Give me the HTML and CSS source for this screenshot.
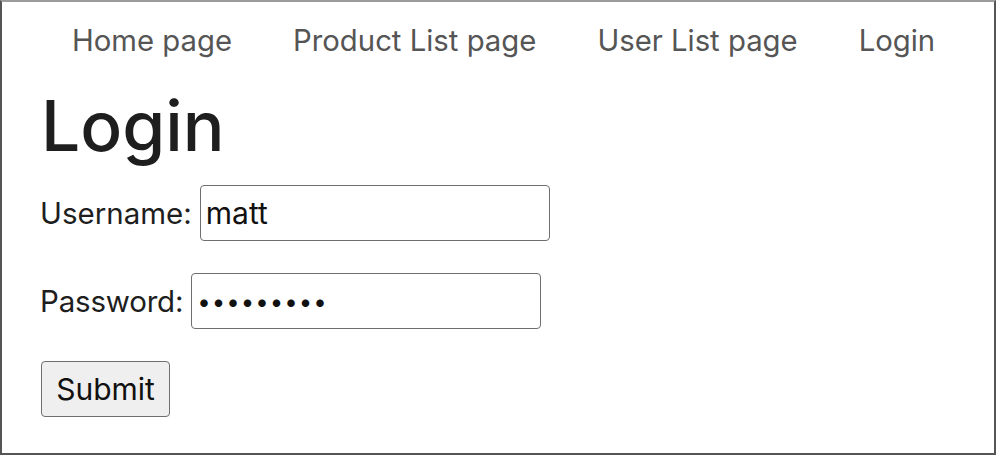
FILE: index.html
```html
<!DOCTYPE html>
<html lang="en">
<head>
<meta charset="utf-8">
<title>Login</title>
<link rel="stylesheet" href="styles.css">
</head>
<body>
<div class="frame">
  <nav class="nav">
    <a class="nav-link" href="#">Home page</a>
    <a class="nav-link" href="#">Product List page</a>
    <a class="nav-link" href="#">User List page</a>
    <a class="nav-link" href="#">Login</a>
  </nav>
  <main class="content">
    <h1 class="title">Login</h1>
    <form class="login-form">
      <div class="row">
        <label class="label" for="username">Username:</label>
        <input class="field" id="username" type="text" value="matt">
      </div>
      <div class="row">
        <label class="label label-tight" for="password">Password:</label>
        <input class="field field-password" id="password" type="password" value="123456789">
      </div>
      <div class="row">
        <button class="submit" type="button">Submit</button>
      </div>
    </form>
  </main>
</div>
</body>
</html>
```

FILE: styles.css
```css
* { box-sizing: border-box; }

html, body {
  margin: 0;
  padding: 0;
  background: #ffffff;
}

body {
  font-family: Inter, "Noto Sans", "Liberation Sans", sans-serif;
  color: #1d1d1d;
}

.frame {
  width: 996px;
  height: 455px;
  border: 2px solid #555555;
  border-top-color: #9c9c9c;
  overflow: hidden;
}

.nav {
  display: flex;
  gap: 61px;
  padding: 21px 0 0 70px;
}

.nav-link {
  font-size: 29.3px;
  line-height: 36px;
  color: #555555;
  text-decoration: none;
}

.content {
  padding-left: 37px;
}

.title {
  margin: 24px 0 0 2px;
  font-size: 69.5px;
  line-height: 86px;
  font-weight: 500;
  color: #1e1e1e;
}

.login-form {
  margin-top: 16px;
  display: flex;
  flex-direction: column;
  gap: 32px;
}

.row {
  display: flex;
  align-items: center;
  gap: 8px;
}

.label {
  font-size: 29.5px;
  line-height: 36px;
  color: #1e1e1e;
  margin-left: 1px;
}

.label-tight {
  letter-spacing: -0.2px;
}

.field {
  width: 350px;
  height: 56px;
  border: 1px solid #6f6f6f;
  border-radius: 4px;
  padding: 0 5px;
  font-family: inherit;
  font-size: 30px;
  color: #111111;
  background: #ffffff;
  outline: none;
}

.field-password {
  font-size: 24px;
  letter-spacing: 1px;
  padding-left: 5px;
}

.submit {
  width: 129px;
  height: 56px;
  margin-left: 2px;
  border: 1px solid #6f6f6f;
  border-radius: 4px;
  background: #efefef;
  font-family: inherit;
  font-size: 30px;
  color: #111111;
  padding: 0;
}
```
